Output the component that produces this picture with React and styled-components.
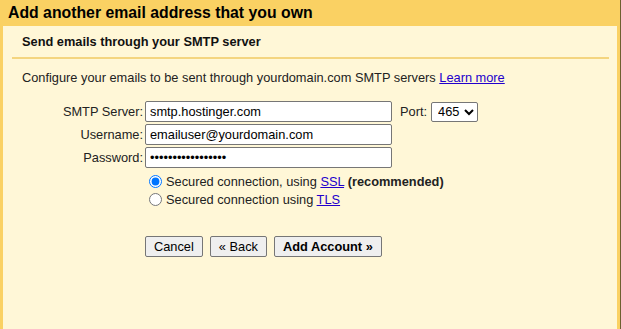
import React from "react";
import styled, { createGlobalStyle } from "styled-components";

const Global = createGlobalStyle`
    html, body {
        margin: 0;
        padding: 0;
        background: #fff7d7;
    }
    * {
        box-sizing: border-box;
    }
`;

const Page = styled.div`
    width: 621px;
    height: 329px;
    display: flex;
    flex-direction: column;
    font-family: "Liberation Sans", Arial, sans-serif;
    font-size: 12.8px;
    color: #222;
    border-right: 1px solid #6e6030;
    overflow: hidden;
`;

const TitleBar = styled.div`
    height: 26px;
    background: #fad163;
    padding: 0 8px;
    display: flex;
    align-items: center;
    font-size: 15.8px;
    font-weight: bold;
    color: #000;
`;

const Body = styled.div`
    flex: 1;
    background: #fff7d7;
    border-left: 3px solid #fad163;
    border-right: 3px solid #fad163;
    padding: 0 8px 0 9px;
`;

const Section = styled.div`
    border-bottom: 2px solid #f4d57f;
    padding: 8px 10px 8px;
    line-height: 15px;
    font-weight: bold;
    color: #111;
`;

const Content = styled.div`
    padding: 11px 10px 0;
`;

const Intro = styled.div`
    line-height: 15px;
`;

const Link = styled.a`
    color: #2200cc;
    text-decoration: underline;
    cursor: pointer;
`;

const Form = styled.div`
    margin-top: 16px;
    display: grid;
    grid-template-columns: 121px auto;
    column-gap: 2px;
    row-gap: 2px;
    align-items: center;
`;

const Label = styled.label`
    text-align: right;
    line-height: 21px;
`;

const FieldRow = styled.div`
    display: flex;
    align-items: center;
    gap: 4px;
`;

const Input = styled.input`
    width: 247px;
    height: 21px;
    padding: 0 4px;
    border: 1px solid #767676;
    border-radius: 2px;
    background: #fff;
    font-family: "Liberation Sans", Arial, sans-serif;
    font-size: 12.8px;
    color: #000;
    outline: none;
`;

const PortLabel = styled.span`
    margin-left: 4px;
`;

const Select = styled.select`
    height: 20px;
    width: 47px;
    border: 1px solid #767676;
    border-radius: 2px;
    background: #fff;
    font-family: "Liberation Sans", Arial, sans-serif;
    font-size: 12.8px;
    color: #000;
    padding: 0 0 0 2px;
`;

const Options = styled.div`
    margin: 5px 0 0 123px;
    display: flex;
    flex-direction: column;
    gap: 1px;
`;

const RadioRow = styled.label`
    display: flex;
    align-items: center;
    height: 17px;
    gap: 4px;
`;

const Radio = styled.input`
    margin: 0 0 0 4px;
    width: 13px;
    height: 13px;
`;

const Buttons = styled.div`
    margin: 28px 0 0 123px;
    display: flex;
    gap: 7px;
`;

const Button = styled.button`
    height: 21px;
    padding: 0 8px;
    border: 1px solid #767676;
    border-radius: 2px;
    background: #efefef;
    font-family: "Liberation Sans", Arial, sans-serif;
    font-size: 12.8px;
    font-weight: ${(p) => (p.$primary ? "bold" : "normal")};
    color: #000;
`;

export default function App() {
    return (
        <Page>
            <Global />
            <TitleBar>Add another email address that you own</TitleBar>
            <Body>
                <Section>Send emails through your SMTP server</Section>
                <Content>
                    <Intro>
                        Configure your emails to be sent through yourdomain.com SMTP servers{" "}
                        <Link>Learn more</Link>
                    </Intro>
                    <Form>
                        <Label>SMTP Server:</Label>
                        <FieldRow>
                            <Input defaultValue="smtp.hostinger.com" />
                            <PortLabel>Port:</PortLabel>
                            <Select defaultValue="465">
                                <option>465</option>
                                <option>587</option>
                            </Select>
                        </FieldRow>
                        <Label>Username:</Label>
                        <FieldRow>
                            <Input defaultValue="emailuser@yourdomain.com" />
                        </FieldRow>
                        <Label>Password:</Label>
                        <FieldRow>
                            <Input type="password" defaultValue="passwordpassword1" />
                        </FieldRow>
                    </Form>
                    <Options>
                        <RadioRow>
                            <Radio type="radio" name="sec" defaultChecked />
                            <span>
                                Secured connection, using <Link>SSL</Link> <b>(recommended)</b>
                            </span>
                        </RadioRow>
                        <RadioRow>
                            <Radio type="radio" name="sec" />
                            <span>
                                Secured connection using <Link>TLS</Link>
                            </span>
                        </RadioRow>
                    </Options>
                    <Buttons>
                        <Button>Cancel</Button>
                        <Button>« Back</Button>
                        <Button $primary>Add Account »</Button>
                    </Buttons>
                </Content>
            </Body>
        </Page>
    );
}
